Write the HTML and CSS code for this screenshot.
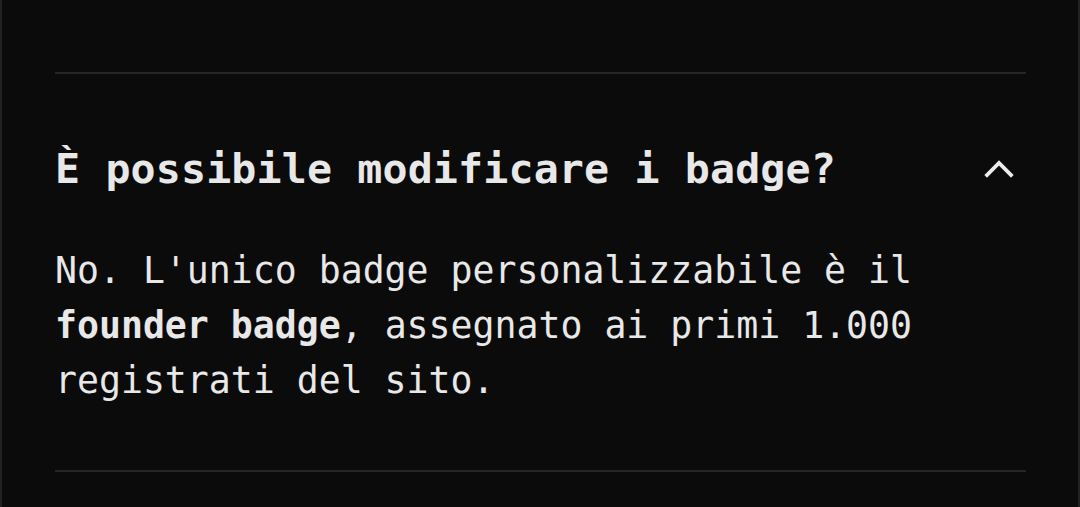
FILE: index.html
```html
<!DOCTYPE html>
<html lang="it">
<head>
<meta charset="utf-8">
<title>FAQ</title>
<link rel="stylesheet" href="styles.css">
</head>
<body>
<div class="card">
  <div class="prev-item"></div>
  <div class="faq-item">
    <div class="question">
      <h3 class="question-text">È possibile modificare i badge?</h3>
      <svg class="chevron" width="30" height="20" viewBox="0 0 30 20" aria-hidden="true">
        <polyline points="3,16 15,4 27,16" fill="none" stroke="#ececec" stroke-width="3.8" stroke-linecap="square" stroke-linejoin="miter"/>
      </svg>
    </div>
    <p class="answer">No. L'unico badge personalizzabile è il <strong>founder badge</strong>, assegnato ai primi 1.000 registrati del sito.</p>
  </div>
</div>
</body>
</html>
```

FILE: styles.css
```css
html, body {
  margin: 0;
  padding: 0;
  background: #0b0b0b;
}

.card {
  box-sizing: border-box;
  height: 507px;
  background: #0b0b0b;
  border-left: 2px solid #222222;
  border-right: 2px solid #222222;
  padding: 0 52px 0 53px;
  font-family: "DejaVu Sans Mono", "Liberation Mono", monospace;
  color: #e8e8e8;
}

.prev-item {
  height: 72px;
  border-bottom: 2px solid #262626;
}

.faq-item {
  padding: 70px 0 62px;
  border-bottom: 2px solid #262626;
}

.question {
  display: flex;
  align-items: center;
  justify-content: space-between;
  padding-right: 12px;
}

.question-text {
  margin: 0;
  font-size: 41.6px;
  line-height: 50px;
  letter-spacing: 0.15px;
  font-weight: bold;
  color: #e8e8e8;
}

.chevron {
  display: block;
  margin-top: -1px;
}

.answer {
  margin: 49px 0 0;
  font-size: 36.5px;
  line-height: 55px;
  width: 880px;
}

.answer strong {
  font-weight: bold;
}
```
